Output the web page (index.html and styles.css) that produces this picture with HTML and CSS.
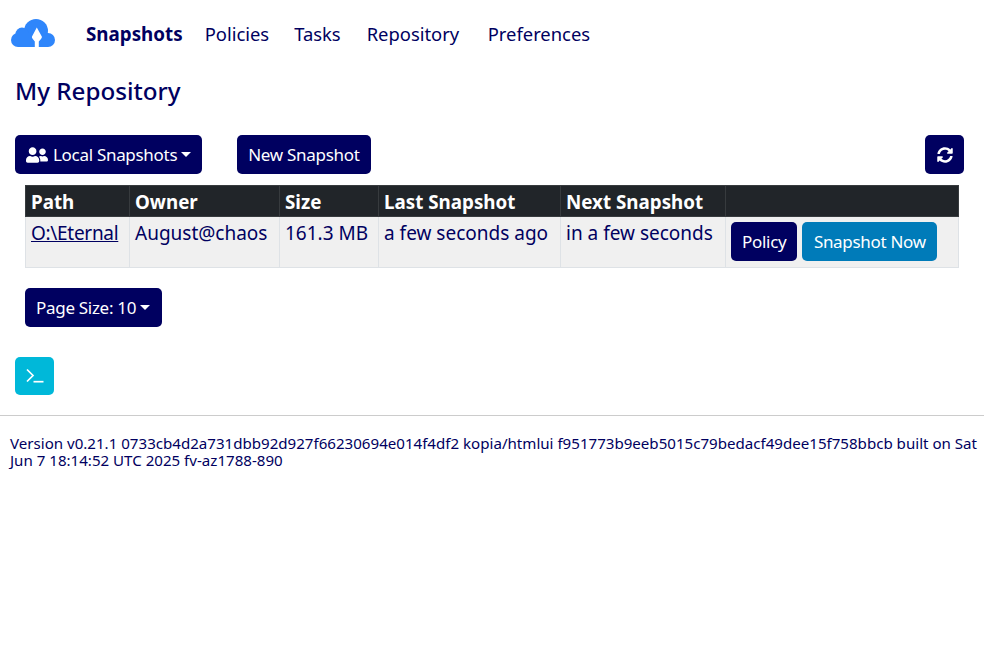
FILE: index.html
```html
<!DOCTYPE html>
<html lang="en">
<head>
<meta charset="utf-8">
<title>Snapshots</title>
<link rel="stylesheet" href="styles.css">
</head>
<body>
<nav class="navbar">
  <a class="brand" href="#" aria-label="Kopia">
    <svg class="logo" viewBox="0 0 44 28" width="44" height="28">
      <g fill="#2f86fb">
        <circle cx="25" cy="12" r="12"/>
        <circle cx="11" cy="15" r="6.500"/>
        <circle cx="7" cy="21" r="7"/>
        <circle cx="37" cy="21" r="7"/>
        <rect x="7" y="14" width="30" height="14"/>
      </g>
      <path fill="#fff" d="M25.800 8.500 21 17.500C20.800 18.500 21 19 21.800 20L23.800 22.500 23.800 28 27.800 28 27.800 22.500 30 20C30.800 19 31 18.500 30.800 17.500Z"/>
    </svg>
  </a>
  <a class="nav-link active" href="#">Snapshots</a>
  <a class="nav-link" href="#">Policies</a>
  <a class="nav-link tasks" href="#">Tasks</a>
  <a class="nav-link repo" href="#">Repository</a>
  <a class="nav-link" href="#">Preferences</a>
</nav>

<main class="main">
  <h4 class="title">My Repository</h4>

  <div class="toolbar">
    <button class="btn primary caret local">
      <svg class="users" viewBox="0 0 640 512" width="22" height="18"><path fill="#fff" d="M192 256c61.900 0 112-50.100 112-112S253.900 32 192 32 80 82.100 80 144s50.100 112 112 112zm76.800 32h-8.300c-20.800 10-43.900 16-68.500 16s-47.600-6-68.500-16h-8.300C51.600 288 0 339.600 0 403.200V432c0 26.500 21.500 48 48 48h288c26.500 0 48-21.500 48-48v-28.800c0-63.600-51.600-115.200-115.200-115.200zM480 256c53 0 96-43 96-96s-43-96-96-96-96 43-96 96 43 96 96 96zm48 32h-3.800c-13.900 4.800-28.600 8-44.200 8s-30.300-3.200-44.200-8H432c-20.400 0-39.200 5.900-55.700 15.400 24.400 26.300 39.700 61.200 39.700 99.800v38.400c0 2.200-.5 4.300-.6 6.400H592c26.500 0 48-21.500 48-48 0-61.900-50.100-112-112-112z"/></svg>
      <span>Local Snapshots</span>
    </button>
    <button class="btn primary new">New Snapshot</button>
    <button class="btn primary refresh" aria-label="Refresh">
      <svg viewBox="0 0 512 512" width="16" height="16"><path fill="#fff" d="M370.720 133.280C339.458 104.008 298.888 87.962 255.848 88c-77.458.068-144.328 53.178-162.791 126.850-1.344 5.363-6.122 9.150-11.651 9.150H24.103c-7.498 0-13.194-6.807-11.807-14.176C33.933 94.924 134.813 8 256 8c66.448 0 126.791 26.136 171.315 68.685L463.030 40.970C478.149 25.851 504 36.559 504 57.941V192c0 13.255-10.745 24-24 24H345.941c-21.382 0-32.090-25.851-16.971-40.971l41.750-41.749zM32 296h134.059c21.382 0 32.090 25.851 16.971 40.971l-41.750 41.750c31.262 29.273 71.835 45.319 114.876 45.280 77.418-.070 144.315-53.144 162.787-126.849 1.344-5.363 6.122-9.150 11.651-9.150h57.304c7.498 0 13.194 6.807 11.807 14.176C478.067 417.076 377.187 504 256 504c-66.448 0-126.791-26.136-171.315-68.685L48.970 471.030C33.851 486.149 8 475.441 8 454.059V320c0-13.255 10.745-24 24-24z"/></svg>
    </button>
  </div>

  <div class="table-wrap">
    <table class="table">
      <colgroup>
        <col class="c-path"><col class="c-owner"><col class="c-size"><col class="c-last"><col class="c-next"><col>
      </colgroup>
      <thead>
        <tr><th>Path</th><th>Owner</th><th>Size</th><th>Last Snapshot</th><th>Next Snapshot</th><th></th></tr>
      </thead>
      <tbody>
        <tr>
          <td><a class="path-link" href="#">O:\Eternal</a></td>
          <td>August@chaos</td>
          <td>161.3 MB</td>
          <td>a few seconds ago</td>
          <td>in a few seconds</td>
          <td class="actions"><button class="btn primary">Policy</button><button class="btn info">Snapshot Now</button></td>
        </tr>
      </tbody>
    </table>
    <button class="btn primary caret page-size"><span>Page Size: 10</span></button>
  </div>

  <button class="btn cyan terminal" aria-label="Logs">
    <svg viewBox="0 0 20 20" width="20" height="20" fill="none" stroke="#fff" stroke-width="1.700"><path d="M2 3.500 8 9.500 2 15.500"/><path d="M8.500 15.700H18.500"/></svg>
  </button>
</main>

<hr class="rule">
<p class="version">Version v0.21.1 0733cb4d2a731dbb92d927f66230694e014f4df2 kopia/htmlui f951773b9eeb5015c79bedacf49dee15f758bbcb built on Sat Jun 7 18:14:52 UTC 2025 fv-az1788-890</p>
</body>
</html>
```
FILE: styles.css
```css
* { box-sizing: border-box; }

html, body { margin: 0; padding: 0; }

body {
  background: #fff;
  color: #000060;
  font-family: "Noto Sans", "Liberation Sans", sans-serif;
  font-size: 19px;
  line-height: 1.5;
}

a { color: inherit; }

.navbar {
  display: flex;
  align-items: center;
  height: 68px;
  padding-left: 11px;
}

.brand { display: flex; width: 75px; }
.logo { display: block; margin-top: -2px; }

.nav-link {
  text-decoration: none;
  font-size: 18.400px;
  margin-right: 25px;
  white-space: nowrap;
}
.nav-link.active { font-weight: 700; font-size: 18.800px; margin-right: 22px; }
.nav-link.tasks { margin-right: 26px; }
.nav-link.repo { margin-right: 28.500px; }

.main { padding: 0 20px 0 15px; }

.title {
  margin: 0;
  font-size: 24.200px;
  font-weight: 500;
  line-height: 1.2;
  height: 67px;
  padding: 8px 0 0;
}

.toolbar {
  display: flex;
  align-items: center;
  gap: 35px;
  height: 39px;
}

.btn {
  display: inline-flex;
  align-items: center;
  height: 39px;
  padding: 0 11px;
  border: 0;
  border-radius: 5px;
  color: #fff;
  font: inherit;
  font-size: 17px;
  letter-spacing: -0.300px;
  white-space: nowrap;
}
.primary { background: #000060; }
.info { background: #007bb9; }
.cyan { background: #00b8d9; }

.caret::after {
  content: "";
  display: inline-block;
  margin-left: 4px;
  border-top: 5px solid #fff;
  border-left: 5px solid transparent;
  border-right: 5px solid transparent;
}

.users { margin-right: 5px; }
.refresh { margin-left: auto; width: 39px; justify-content: center; padding: 0; }

.table-wrap { padding: 11px 5px 0 10px; }

.table {
  width: 934px;
  table-layout: fixed;
  border-collapse: collapse;
}
.c-path { width: 104px; }
.c-owner { width: 150px; }
.c-size { width: 99px; }
.c-last { width: 182px; }
.c-next { width: 165px; }

.table th {
  background: #212529;
  border: 1px solid #373b3e;
  color: #fff;
  font-size: 18.800px;
  font-weight: 700;
  line-height: 24px;
  text-align: left;
  padding: 2px 5px 0;
  height: 31px;
  white-space: nowrap;
}

.table td {
  background: #f0f0f0;
  border: 1px solid #dee2e6;
  vertical-align: top;
  padding: 2px 5px;
  height: 51px;
  white-space: nowrap;
}

.path-link { letter-spacing: -0.300px; }

.table .actions { padding: 5px 5px 4px; }
.actions .btn + .btn { margin-left: 5px; }
.actions .info { padding: 0 11.500px; }

.page-size { margin-top: 20px; display: flex; padding-right: 12px; }

.terminal {
  display: flex;
  justify-content: center;
  width: 39px;
  padding: 0;
  margin-top: 30px;
  height: 38px;
}

.rule {
  margin: 20px 0 0;
  border: 0;
  border-top: 1px solid #ccc;
}

.version {
  margin: 0;
  padding: 19px 5px 0 10px;
  font-size: 15.100px;
  line-height: 17px;
}
```
